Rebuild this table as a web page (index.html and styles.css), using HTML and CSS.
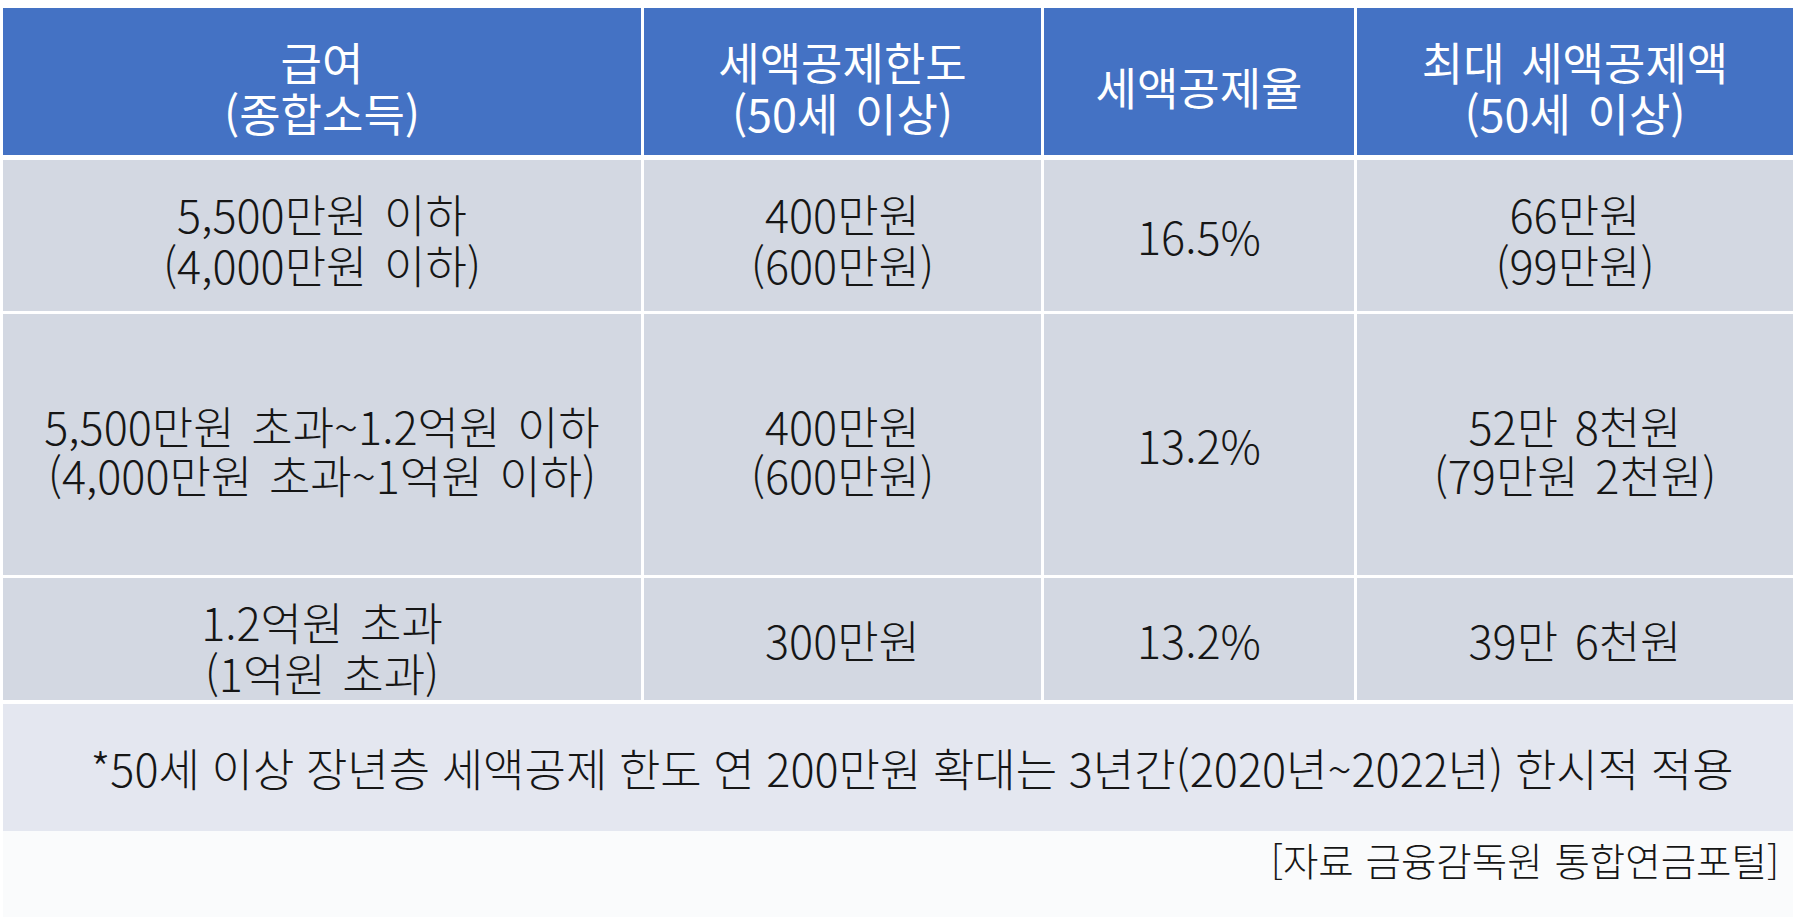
FILE: index.html
```html
<!DOCTYPE html>
<html lang="ko">
<head>
<meta charset="utf-8">
<title>연금저축 세액공제</title>
<link rel="stylesheet" href="styles.css">
</head>
<body>
<div class="page">
  <div class="table">
    <div class="cell head">급여<br>(종합소득)</div>
    <div class="cell head">세액공제한도<br>(50세 이상)</div>
    <div class="cell head">세액공제율</div>
    <div class="cell head">최대 세액공제액<br>(50세 이상)</div>

    <div class="cell row1">5,500만원 이하<br>(4,000만원 이하)</div>
    <div class="cell row1">400만원<br>(600만원)</div>
    <div class="cell row1 one">16.5%</div>
    <div class="cell row1">66만원<br>(99만원)</div>

    <div class="cell row2">5,500만원 초과~1.2억원 이하<br>(4,000만원 초과~1억원 이하)</div>
    <div class="cell row2">400만원<br>(600만원)</div>
    <div class="cell row2 one">13.2%</div>
    <div class="cell row2">52만 8천원<br>(79만원 2천원)</div>

    <div class="cell row3 two">1.2억원 초과<br>(1억원 초과)</div>
    <div class="cell row3 one">300만원</div>
    <div class="cell row3 one">13.2%</div>
    <div class="cell row3 one">39만 6천원</div>

    <div class="cell note">*50세 이상 장년층 세액공제 한도 연 200만원 확대는 3년간(2020년~2022년) 한시적 적용</div>
  </div>
  <div class="source">[자료 금융감독원 통합연금포털]</div>
</div>
</body>
</html>
```
FILE: styles.css
```css
html, body {
  margin: 0;
  padding: 0;
  background: #ffffff;
}

body {
  font-family: "Noto Sans CJK KR", "Noto Sans", sans-serif;
  font-size: 45px;
  font-weight: 300;
  color: #161616;
  word-spacing: 4px;
}

.page {
  width: 1812px;
  height: 917px;
  padding: 8px 0 0 3px;
  box-sizing: border-box;
  display: flex;
  flex-direction: column;
}

.table {
  width: 1790px;
  display: grid;
  grid-template-columns: 638px 397px 310px 436px;
  grid-template-rows: 149px 151px 261px 122px 128px;
  column-gap: 3px;
  row-gap: 3px;
  background: #ffffff;
}

.cell {
  display: flex;
  align-items: center;
  justify-content: center;
  text-align: center;
  line-height: 51px;
  padding-top: 6px;
  box-sizing: border-box;
}

.cell.one {
  padding-top: 0;
}

.head {
  background: #4472c4;
  color: #ffffff;
  font-weight: 400;
  height: 147px;
  padding-top: 10px;
}

.row1, .row2, .row3 {
  background: #d3d8e2;
}

.row2 {
  padding-top: 10px;
  line-height: 49px;
}

.row3.two {
  padding-top: 16px;
}

.note {
  grid-column: 1 / -1;
  background: #e4e7f0;
  margin-top: 1px;
  padding: 0 0 0 28px;
  word-spacing: -1px;
}

.source {
  width: 1790px;
  flex: 1;
  background: #fafbfc;
  display: flex;
  justify-content: flex-end;
  align-items: flex-start;
  padding: 4px 14px 0 0;
  box-sizing: border-box;
  font-size: 38.5px;
  line-height: 48px;
  word-spacing: 1px;
}
```
